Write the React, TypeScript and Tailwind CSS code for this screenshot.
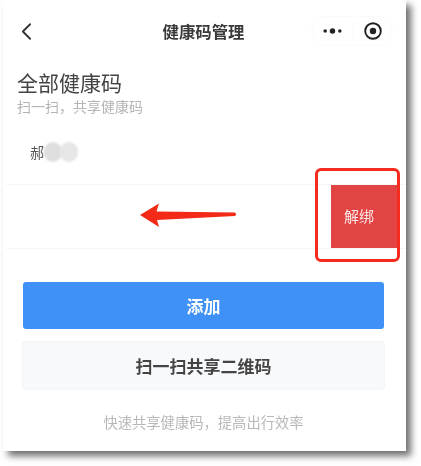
import React from 'react';
import { ChevronLeft } from 'lucide-react';

const cjk = "font-['Noto_Sans_CJK_SC','Liberation_Sans',sans-serif]";

const App = () => {
  return (
    <div className={`relative w-[421px] h-[466px] bg-white overflow-hidden ${cjk}`}>
      <div className="relative ml-[3px] w-[403px] h-[451px] bg-white shadow-[5px_5px_7px_#6f6f6f] flex flex-col blur-[0.6px]">
        {/* Nav bar */}
        <div className="relative flex items-center h-[30px] mt-4 pl-[9px] pr-[13px] justify-between">
          <ChevronLeft className="w-[29px] h-[29px] text-[#333333]" strokeWidth={1.5} />
          <span className="absolute left-0 right-[2px] text-center text-[16.4px] font-bold text-[#3a3a3a]">健康码管理</span>
          <div className="flex items-center w-[82px] h-[30px] rounded-full border border-[#fbfbfb]">
            <svg width="41" height="12" viewBox="0 0 42 12" className="shrink-0">
              <circle cx="13.5" cy="6" r="1.8" fill="#222" />
              <circle cx="21" cy="6" r="2.8" fill="#222" />
              <circle cx="28.5" cy="6" r="1.8" fill="#222" />
            </svg>
            <div className="w-px h-[18px] bg-[#f8f8f8]" />
            <svg width="20" height="20" viewBox="0 0 20 20" className="ml-[9px] shrink-0">
              <circle cx="10" cy="10" r="7.8" fill="none" stroke="#222" strokeWidth="1.9" />
              <circle cx="10" cy="10" r="3.2" fill="#222" />
            </svg>
          </div>
        </div>

        {/* Heading */}
        <div className="pl-[14px] mt-[22px]">
          <h1 className="text-[21px] leading-[28px] text-[#444444]">全部健康码</h1>
          <p className="text-sm leading-[18px] text-[#b4b4b4] mt-[1px]">扫一扫，共享健康码</p>
        </div>

        {/* Code row */}
        <div className="flex items-center pl-[27px] mt-[27px] h-[20px]">
          <span className="text-sm text-[#555555]">郝</span>
          <div className="w-[18px] h-[20px] rounded-full bg-[#dedede] blur-[1px]" />
          <div className="w-[18px] h-[20px] -ml-[2px] rounded-full bg-[#e6e6e6] blur-[1px]" />
        </div>

        {/* Swiped row */}
        <div className="flex items-stretch justify-end mt-[22px] ml-[3px] h-[65px] border-y border-[#f6f6f6]">
          <div className="flex items-center pl-[13px] w-[68px] mr-[7px] bg-[#e24443] text-[15px] text-[#fbe9e9]">解绑</div>
        </div>

        {/* Buttons */}
        <button className="mt-[33px] ml-5 w-[361px] h-[47px] shrink-0 rounded-[3px] bg-[#4091f7] text-white text-[17px] font-semibold">添加</button>
        <button className="mt-3 ml-[19px] w-[363px] h-[49px] shrink-0 rounded-[4px] bg-[#f8f9fb] border border-[#f3f4f6] text-[#444444] text-[17px] font-bold">扫一扫共享二维码</button>
        <p className="mt-[21px] pr-[2px] text-center text-[14.3px] text-[#b8b8b8]">快速共享健康码，提高出行效率</p>
      </div>

      {/* Annotations drawn over the screenshot */}
      <svg width="100" height="24" viewBox="0 0 100 24" className="absolute left-[139px] top-[203px]">
        <path d="M1 12 L20 0.5 L17.5 8.5 L96 9.5 Q98 11.5 96 13 L18 17 L20 24 Z" fill="#f42a18" />
      </svg>
      <div className="absolute left-[315px] top-[168px] w-[85px] h-[94px] rounded-[6px] border-[3px] border-[#f62b1f]" />
    </div>
  );
};

export default App;
